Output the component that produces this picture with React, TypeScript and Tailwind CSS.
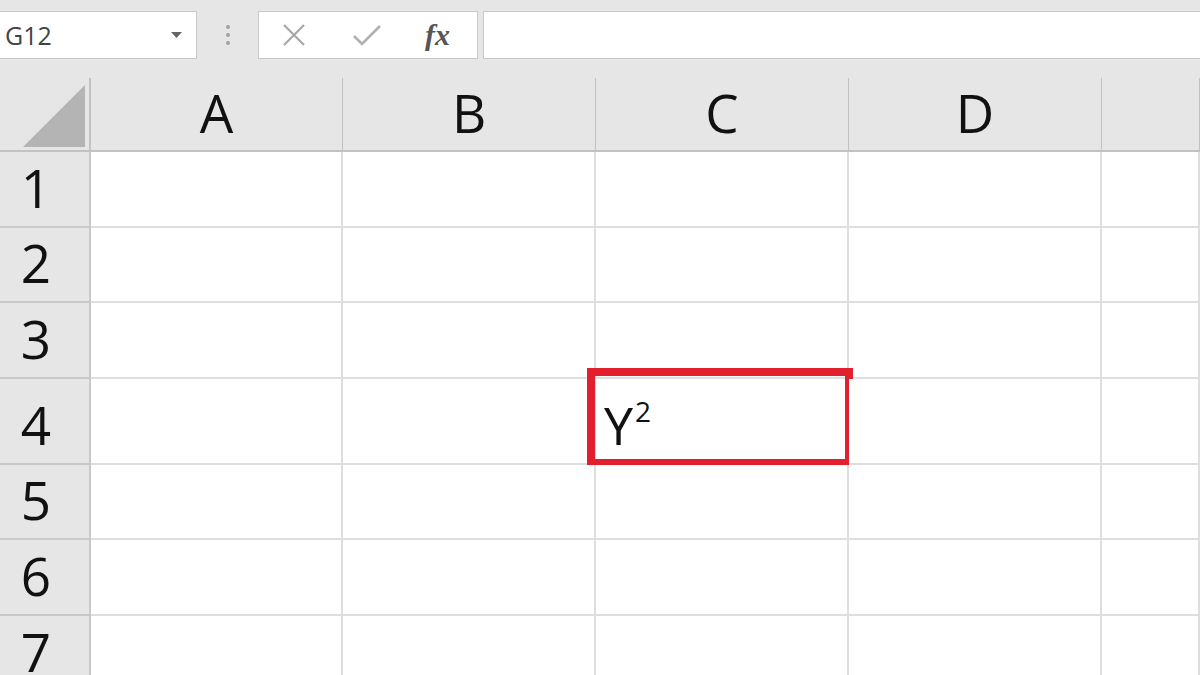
import React from "react";

const cols = ["A", "B", "C", "D", ""];
const rows = [
  { n: "1", h: "h-[76px]" },
  { n: "2", h: "h-[75px]" },
  { n: "3", h: "h-[76px]" },
  { n: "4", h: "h-[86px]" },
  { n: "5", h: "h-[75px]" },
  { n: "6", h: "h-[76px]" },
  { n: "7", h: "h-[76px]" },
];

function Toolbar() {
  return (
    <div className="flex h-[78px] items-start pt-[11px]">
      <div className="flex h-[48px] w-[197px] items-center justify-between border border-l-0 border-[#c9c9c9] bg-white pl-[5px] pr-[14px]">
        <span className="text-[25px] leading-none text-[#444]">G12</span>
        <svg width="11" height="6" viewBox="0 0 11 6">
          <polygon points="0,0 11,0 5.5,6" fill="#666" />
        </svg>
      </div>
      <div className="flex h-[48px] w-[61px] flex-col items-center justify-center gap-[4px]">
        <span className="h-[4px] w-[4px] rounded-full bg-[#a3a3a3]" />
        <span className="h-[4px] w-[4px] rounded-full bg-[#a3a3a3]" />
        <span className="h-[4px] w-[4px] rounded-full bg-[#a3a3a3]" />
      </div>
      <div className="flex h-[48px] w-[220px] items-center border border-[#c9c9c9] bg-white">
        <svg className="ml-[23px]" width="24" height="22" viewBox="0 0 24 22">
          <path d="M2 1 L22 21 M22 1 L2 21" stroke="#a8a8a8" strokeWidth="2.2" fill="none" />
        </svg>
        <svg className="ml-[47px]" width="28" height="22" viewBox="0 0 28 22">
          <path d="M1 12 L9 20 L27 2" stroke="#b0b0b0" strokeWidth="2.6" fill="none" />
        </svg>
        <span
          className="ml-[44px] text-[30px] font-bold italic leading-none text-[#555]"
          style={{ fontFamily: '"Liberation Serif", "DejaVu Serif", serif' }}
        >
          fx
        </span>
      </div>
      <div className="ml-[5px] h-[48px] flex-1 border border-r-0 border-[#c9c9c9] bg-white" />
    </div>
  );
}

export default function App() {
  return (
    <div
      className="h-[675px] w-[1200px] overflow-hidden bg-[#e6e6e6]"
      style={{ fontFamily: '"Open Sans", "Noto Sans", sans-serif' }}
    >
      <Toolbar />
      <div className="grid grid-cols-[91px_252px_253px_253px_253px_1fr]">
        <div className="relative h-[74px] border-r-2 border-b-2 border-[#c2c2c2] bg-[#e6e6e6]">
          <svg className="absolute left-[23px] top-[7px]" width="62" height="62" viewBox="0 0 62 62">
            <polygon points="0,62 62,62 62,0" fill="#b4b4b4" />
          </svg>
        </div>
        {cols.map((c, i) => (
          <div
            key={i}
            className="flex h-[74px] items-end justify-center border-r border-b-2 border-[#c2c2c2] bg-[#e6e6e6] pb-[11px]"
          >
            <span className="text-[53px] leading-none text-[#111]">{c}</span>
          </div>
        ))}
        {rows.map((r) => (
          <React.Fragment key={r.n}>
            <div
              className={`${r.h} flex items-end border-r-2 border-b-2 border-[#c8c8c8] bg-[#e6e6e6] pb-[12px]`}
            >
              <span className="w-[72px] text-center text-[53px] leading-none text-[#111]">{r.n}</span>
            </div>
            {cols.map((c, i) => (
              <div
                key={i}
                className={`${r.h} relative flex items-end border-r-2 border-b-2 border-[#dedede] bg-white`}
              >
                {r.n === "4" && c === "C" && (
                  <>
                    <span className="pb-[12px] pl-[8px] text-[52px] leading-none text-[#111]">
                      Y<span className="relative -top-[23px] ml-[2px] text-[28px] leading-none">2</span>
                    </span>
                    <div className="absolute left-[-9px] top-[-11px] h-[99px] w-[266px] border-[8px] border-[#e21f2d]" />
                  </>
                )}
              </div>
            ))}
          </React.Fragment>
        ))}
      </div>
    </div>
  );
}
